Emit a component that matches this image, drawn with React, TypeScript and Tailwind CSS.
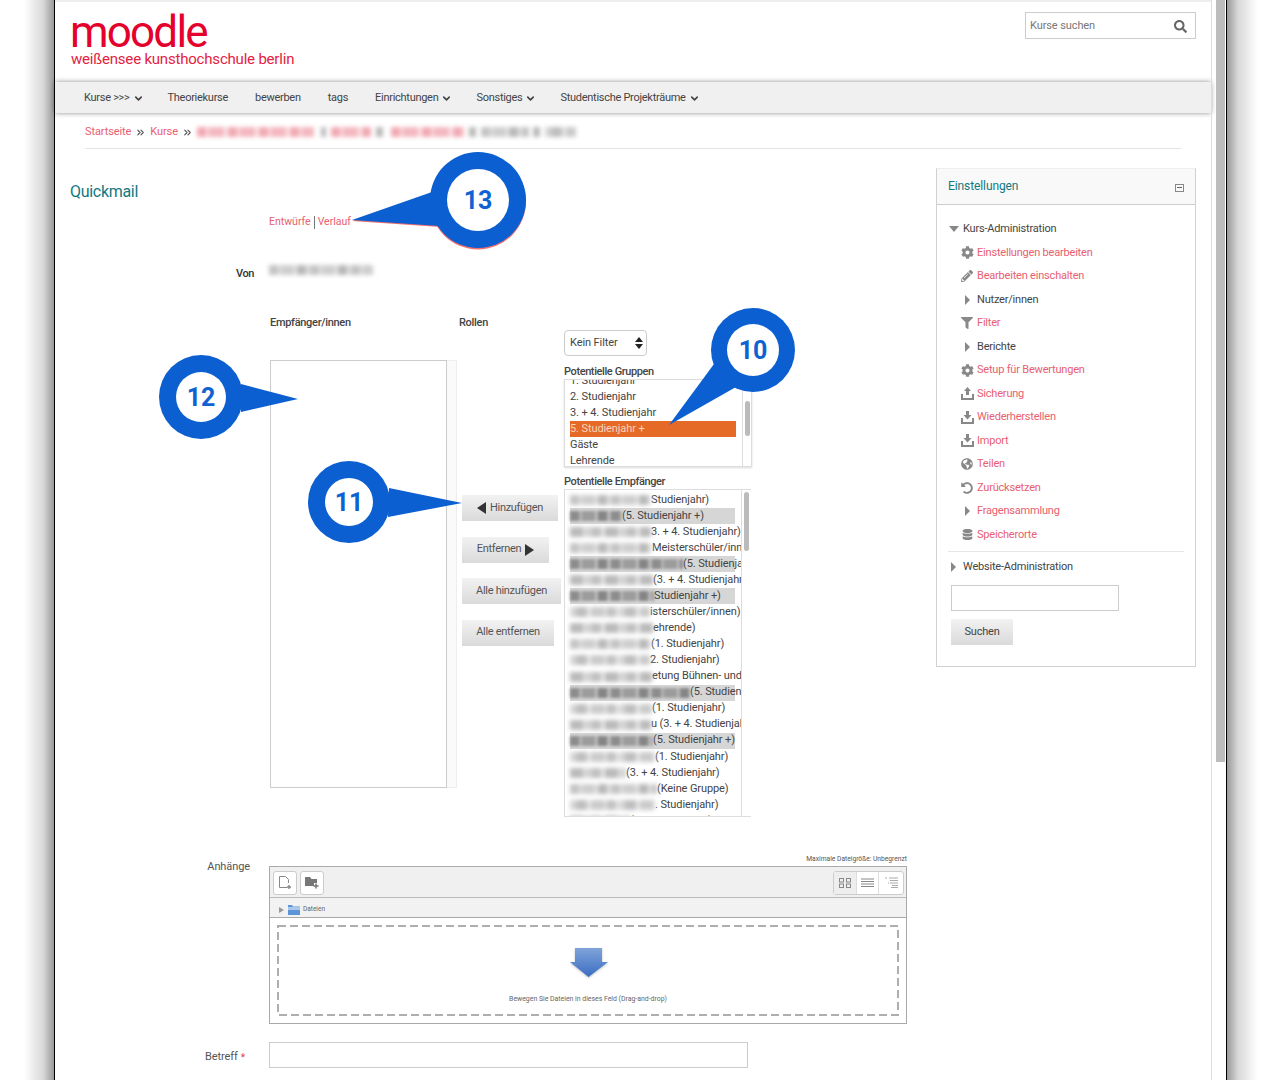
import { ChevronDown, ChevronsRight } from "lucide-react";
import { FaCog, FaDatabase, FaFilter, FaGlobeAmericas, FaPencilAlt, FaSearch, FaUndoAlt } from "react-icons/fa";

const smudges = [
  "block h-[10px] blur-[2px] bg-[repeating-linear-gradient(90deg,#c4c4c4_0_9px,#e0e0e0_9px_12px,#cecece_12px_25px,#e8e8e8_25px_28px,#b8b8b8_28px_37px,#e0e0e0_37px_41px)]",
  "block h-[10px] blur-[2px] bg-[repeating-linear-gradient(90deg,#d6d6d6_0_6px,#bebebe_6px_17px,#e6e6e6_17px_21px,#cbcbcb_21px_34px,#dedede_34px_37px,#c2c2c2_37px_46px,#e8e8e8_46px_49px)]",
  "block h-[10px] blur-[2px] bg-[repeating-linear-gradient(90deg,#bababa_0_13px,#dcdcdc_13px_16px,#d2d2d2_16px_22px,#c0c0c0_22px_31px,#e6e6e6_31px_35px)]",
];
const smudgeDark =
  "block h-[10px] blur-[1.5px] bg-[repeating-linear-gradient(90deg,#8c8c8c_0_9px,#b4b4b4_9px_12px,#9c9c9c_12px_25px,#bcbcbc_25px_28px,#858585_28px_37px,#b8b8b8_37px_41px)]";
const smudgeRed =
  "block h-[10px] blur-[2px] bg-[repeating-linear-gradient(90deg,#f1a9b3_0_9px,#f9d8dc_9px_12px,#f3b7bf_12px_27px,#fbe4e7_27px_31px)]";

const recipients = [
  { w: "w-[81px]", text: "Studienjahr)", sel: false },
  { w: "w-[52px]", text: "(5. Studienjahr +)", sel: true },
  { w: "w-[81px]", text: "3. + 4. Studienjahr)", sel: false },
  { w: "w-[82px]", text: "Meisterschüler/innen", sel: false },
  { w: "w-[113px]", text: "(5. Studienjahr +)", sel: true },
  { w: "w-[83px]", text: "(3. + 4. Studienjahr)", sel: false },
  { w: "w-[84px]", text: "Studienjahr +)", sel: true },
  { w: "w-[80px]", text: "isterschüler/innen)", sel: false },
  { w: "w-[83px]", text: "ehrende)", sel: false },
  { w: "w-[81px]", text: "(1. Studienjahr)", sel: false },
  { w: "w-[80px]", text: "2. Studienjahr)", sel: false },
  { w: "w-[82px]", text: "etung Bühnen- und", sel: false },
  { w: "w-[120px]", text: "(5. Studienjahr +)", sel: true },
  { w: "w-[82px]", text: "(1. Studienjahr)", sel: false },
  { w: "w-[81px]", text: "u (3. + 4. Studienjahr)", sel: false },
  { w: "w-[83px]", text: "(5. Studienjahr +)", sel: true },
  { w: "w-[85px]", text: "(1. Studienjahr)", sel: false },
  { w: "w-[56px]", text: "(3. + 4. Studienjahr)", sel: false },
  { w: "w-[87px]", text: "(Keine Gruppe)", sel: false },
  { w: "w-[85px]", text: ". Studienjahr)", sel: false },
  { w: "w-[60px]", text: "(5. Studienjahr +)", sel: false },
];

function TreeRight() {
  return (
    <svg width="7" height="10" viewBox="0 0 7 10" className="fill-[#888]">
      <polygon points="1,0 6,5 1,10" />
    </svg>
  );
}

function TrayUp() {
  return (
    <svg width="13" height="13" viewBox="0 0 13 13" className="fill-[#888]">
      <path d="M6.5 0 L10 4 H8 V8 H5 V4 H3 Z" />
      <path d="M0 7 H2 V11 H11 V7 H13 V13 H0 Z" />
    </svg>
  );
}

function TrayDown() {
  return (
    <svg width="13" height="13" viewBox="0 0 13 13" className="fill-[#888]">
      <path d="M5 0 H8 V4 H10.5 L6.5 8.5 L2.5 4 H5 Z" />
      <path d="M0 7 H2 V11 H11 V7 H13 V13 H0 Z" />
    </svg>
  );
}

const adminRows = [
  { icon: <FaCog size={13} />, label: "Einstellungen bearbeiten", link: true },
  { icon: <FaPencilAlt size={12} />, label: "Bearbeiten einschalten", link: true },
  { icon: <TreeRight />, label: "Nutzer/innen", link: false },
  { icon: <FaFilter size={12} />, label: "Filter", link: true },
  { icon: <TreeRight />, label: "Berichte", link: false },
  { icon: <FaCog size={13} />, label: "Setup für Bewertungen", link: true },
  { icon: <TrayUp />, label: "Sicherung", link: true },
  { icon: <TrayDown />, label: "Wiederherstellen", link: true },
  { icon: <TrayDown />, label: "Import", link: true },
  { icon: <FaGlobeAmericas size={12} />, label: "Teilen", link: true },
  { icon: <FaUndoAlt size={12} />, label: "Zurücksetzen", link: true },
  { icon: <TreeRight />, label: "Fragensammlung", link: true },
  { icon: <FaDatabase size={11} />, label: "Speicherorte", link: true },
];

function Callout({ className, w, h, cx, cy, r, inner, tail, label, rim }: {
  className: string; w: number; h: number; cx: number; cy: number; r: number; inner: number; tail: string; label: string; rim?: boolean;
}) {
  return (
    <svg width={w} height={h} viewBox={`0 0 ${w} ${h}`} className={`absolute ${className}`}>
      {rim && <circle cx={cx} cy={cy + 1.5} r={r} fill="#ef6f6f" />}
      {rim && <polygon points={tail} fill="#ef6f6f" transform="translate(0 1)" />}
      <polygon points={tail} fill="#0b5fd1" />
      <circle cx={cx} cy={cy} r={r} fill="#0b5fd1" />
      <circle cx={cx} cy={cy} r={inner} fill="#fff" />
      <text x={cx} y={cy + 9} textAnchor="middle" fontSize="25" fontWeight="700" fill="#0f62d2" fontFamily="Roboto, sans-serif">
        {label}
      </text>
    </svg>
  );
}

function SideButton({ children, className }: { children: React.ReactNode; className: string }) {
  return (
    <div className={`h-[26px] flex items-center justify-center gap-[3px] bg-linear-to-b from-[#f2f2f2] to-[#dadada] text-[#555] text-[11px] tracking-[-0.3px] ${className}`}>
      {children}
    </div>
  );
}

export default function App() {
  return (
    <div className="relative h-[1080px] overflow-hidden flex bg-white font-['Roboto',sans-serif] text-[11px] text-[#444] tracking-[-0.1px]">
      {/* window shadow */}
      <div className="w-[54px] shrink-0 bg-linear-to-r from-white from-45% via-[#d8d8d8] via-80% to-[#9a9a9a]" />

      <div className="w-[1173px] shrink-0 flex border-x border-black">
        <div className="w-[1156px] shrink-0 flex flex-col">
          {/* Header */}
          <header className="h-[82px] shrink-0 border-t-2 border-[#eee] flex justify-between pl-[15px] pr-[15px]">
            <div className="flex flex-col pt-[11px]">
              <span className="text-[44px] leading-[38px] text-[#e4022d] tracking-[-1.8px]">moodle</span>
              <span className="text-[15px] leading-[16px] text-[#e4223f] pl-[1px] tracking-[-0.2px]">weißensee kunsthochschule berlin</span>
            </div>
            <div className="mt-[10px] w-[171px] h-[27px] border border-[#ccc] flex items-center justify-between pl-[4px] pr-[8px] pt-px text-[#777]">
              <span>Kurse suchen</span>
              <FaSearch size={13} className="text-[#666]" />
            </div>
          </header>

          {/* Nav */}
          <nav className="h-[31px] shrink-0 pt-px bg-[#f0f0f0] shadow-[0_0_5px_rgba(0,0,0,0.45)] flex items-center pl-[29px] gap-[27px] text-[#444] tracking-[-0.28px]">
            <span className="flex items-center gap-[3px] -mr-[3px]">Kurse &gt;&gt;&gt; <ChevronDown size={11} strokeWidth={3.5} /></span>
            <span>Theoriekurse</span>
            <span>bewerben</span>
            <span>tags</span>
            <span className="flex items-center gap-[3px] -mr-[3px]">Einrichtungen <ChevronDown size={11} strokeWidth={3.5} /></span>
            <span className="flex items-center gap-[3px] -mr-[3px]">Sonstiges <ChevronDown size={11} strokeWidth={3.5} /></span>
            <span className="flex items-center gap-[3px]">Studentische Projekträume <ChevronDown size={11} strokeWidth={3.5} /></span>
          </nav>

          {/* Breadcrumb */}
          <div className="h-[36px] shrink-0 mx-[30px] pt-[3px] border-b border-[#e2e2e2] flex items-center text-[#e8606f]">
            <span>Startseite</span>
            <ChevronsRight size={11} strokeWidth={2.5} className="text-[#555] mx-[4px]" />
            <span>Kurse</span>
            <ChevronsRight size={11} strokeWidth={2.5} className="text-[#555] mx-[4px]" />
            <span className={`${smudgeRed} w-[117px]`} />
            <span className={`${smudges[2]} w-[5px] ml-[7px]`} />
            <span className={`${smudgeRed} w-[40px] ml-[5px]`} />
            <span className={`${smudges[2]} w-[7px] ml-[5px]`} />
            <span className={`${smudgeRed} w-[74px] ml-[8px]`} />
            <span className={`${smudges[2]} w-[7px] ml-[4px]`} />
            <span className={`${smudges[0]} w-[48px] ml-[5px]`} />
            <span className={`${smudges[2]} w-[7px] ml-[4px]`} />
            <span className={`${smudges[1]} w-[31px] ml-[5px]`} />
          </div>

          {/* Main */}
          <div className="flex pl-[15px] pr-[15px] pt-[19px]">
            <main className="w-[866px] shrink-0 flex flex-col">
              <h2 className="mt-[14px] h-[20px] leading-[20px] text-[16px] text-[#11797f] tracking-[-0.3px]">Quickmail</h2>

              <div className="mt-[12px] h-[16px] pl-[199px] flex items-center text-[#e8606f] text-[10.5px] tracking-normal">
                <span>Entwürfe</span>
                <span className="mx-[3px] w-px h-[13px] bg-[#777]" />
                <span>Verlauf</span>
              </div>

              <div className="mt-[34px] h-[16px] flex items-center">
                <span className="w-[199px] pr-[15px] text-right font-medium text-[#333] pt-[5px] tracking-[-0.4px]">Von</span>
                <span className={`${smudges[0]} w-[104px] -translate-y-[2px]`} />
              </div>

              {/* Recipients */}
              <div className="mt-[34px] flex pl-[199px] h-[503px]">
                <div className="w-[190px] shrink-0">
                  <div className="h-[16px] pt-px leading-[16px] pl-px font-medium text-[#444] tracking-[-0.3px]">Empfänger/innen</div>
                  <div className="mt-[30px] ml-px h-[428px] flex">
                    <div className="w-[177px] border border-[#ccc]" />
                    <div className="w-[10px] bg-[#fafafa] border-y border-r border-[#eee]" />
                  </div>
                </div>

                <div className="w-[105px] shrink-0">
                  <div className="h-[16px] pt-px leading-[16px] font-medium text-[#444] tracking-[-0.3px]">Rollen</div>
                  <div className="mt-[165px] pl-[3px] flex flex-col items-start gap-[15.5px]">
                    <SideButton className="w-[96px]">
                      <svg width="10" height="12" viewBox="0 0 10 12" className="fill-[#333]"><polygon points="9,0 9,12 0,6" /></svg>
                      Hinzufügen
                    </SideButton>
                    <SideButton className="w-[87px]">
                      Entfernen
                      <svg width="10" height="12" viewBox="0 0 10 12" className="fill-[#333]"><polygon points="1,0 1,12 10,6" /></svg>
                    </SideButton>
                    <SideButton className="w-[99px]">Alle hinzufügen</SideButton>
                    <SideButton className="w-[92px]">Alle entfernen</SideButton>
                  </div>
                </div>

                <div className="w-[188px] shrink-0 pt-[16px]">
                  <div className="w-[83px] h-[26px] rounded-[4px] border border-[#ccc] flex items-center justify-between pl-[5px] pr-[3px] text-[#444]">
                    Kein Filter
                    <svg width="8" height="12" viewBox="0 0 8 12" className="fill-[#222]"><polygon points="4,0 8,5 0,5" /><polygon points="4,12 8,7 0,7" /></svg>
                  </div>
                  <div className="mt-[7px] h-[16px] pt-px leading-[16px] font-medium text-[#444] tracking-[-0.4px]">Potentielle Gruppen</div>
                  <div className="h-[88px] flex border border-[#ddd] shadow-[0_1px_2px_rgba(0,0,0,0.15)]">
                    <div className="w-[178px] overflow-hidden border-r border-[#ddd] text-[#444]">
                      <div className="-mt-[7px] pl-[5px] w-[171px]">
                        <div className="h-[16px] leading-[16px]">1. Studienjahr</div>
                        <div className="h-[16px] leading-[16px]">2. Studienjahr</div>
                        <div className="h-[16px] leading-[16px]">3. + 4. Studienjahr</div>
                        <div className="h-[16px] leading-[16px] bg-[#e56a28] text-[#f8d4b8]">5. Studienjahr +</div>
                        <div className="h-[16px] leading-[16px]">Gäste</div>
                        <div className="h-[16px] leading-[16px]">Lehrende</div>
                      </div>
                    </div>
                    <div className="flex-1 pl-[2px] pt-[21px]">
                      <div className="w-[5px] h-[35px] rounded-full bg-[#bbb]" />
                    </div>
                  </div>
                  <div className="mt-[6px] h-[16px] pt-px leading-[16px] font-medium text-[#444] tracking-[-0.4px]">Potentielle Empfänger</div>
                  <div className="h-[328px] flex border-y border-l border-[#ddd] w-[187px]">
                    <div className="w-[177px] overflow-hidden border-r border-[#ddd] text-[#444]">
                      <div className="pt-[2px] pl-[5px]">
                        {recipients.map((row, i) => (
                          <div key={i} className={`h-[16.06px] w-[165px] flex items-center whitespace-nowrap ${row.sel ? "bg-[#d6d6d6]" : ""}`}>
                            <span className={`${row.sel ? smudgeDark : smudges[i % 3]} ${row.w} shrink-0`} />
                            <span>{row.text}</span>
                          </div>
                        ))}
                      </div>
                    </div>
                    <div className="flex-1 pl-[2px] pt-[2px]">
                      <div className="w-[5px] h-[59px] rounded-full bg-[#bbb]" />
                    </div>
                  </div>
                </div>
              </div>

              {/* Attachments */}
              <div className="mt-[35px] flex">
                <div className="w-[199px] pr-[19px] text-right pt-[7px] h-[23px] leading-[16px] text-[#555]">Anhänge</div>
                <div className="w-[638px] flex flex-col">
                  <div className="h-[14px] leading-[14px] text-right text-[6.7px] text-[#555] tracking-normal">Maximale Dateigröße: Unbegrenzt</div>
                  <div className="h-[158px] border border-[#aaa] flex flex-col">
                    <div className="h-[31px] shrink-0 pt-px bg-[#f0f0f0] border-b border-[#bbb] flex items-center justify-between pl-[3px] pr-[2px]">
                      <div className="flex gap-[3px]">
                        <div className="w-[24px] h-[24px] rounded-[3px] bg-white border border-[#ccc] flex items-center justify-center">
                          <svg width="14" height="15" viewBox="0 0 14 15" fill="none" stroke="#888"><path d="M9 12.5 H1.5 V1.5 H7.5 L10.5 4.5 V8" /><path d="M11 10 V14 M9 12 H13" strokeWidth="1.4" /></svg>
                        </div>
                        <div className="w-[24px] h-[24px] rounded-[3px] bg-white border border-[#ccc] flex items-center justify-center">
                          <svg width="14" height="13" viewBox="0 0 14 13"><path d="M0 1 H5 L6.5 3 H12 V7 H9 V10 H0 Z" fill="#777" /><path d="M11 7.5 V12.5 M8.5 10 H13.5" stroke="#777" strokeWidth="1.5" /></svg>
                        </div>
                      </div>
                      <div className="flex h-[24px] rounded-[3px] border border-[#ccc] bg-white">
                        <div className="w-[23px] bg-[#eee] flex items-center justify-center border-r border-[#ddd]">
                          <svg width="12" height="10" viewBox="0 0 12 10" fill="none" stroke="#888"><rect x="0.5" y="0.5" width="4" height="3.5" /><rect x="7.5" y="0.5" width="4" height="3.5" /><rect x="0.5" y="6" width="4" height="3.5" /><rect x="7.5" y="6" width="4" height="3.5" /></svg>
                        </div>
                        <div className="w-[22px] flex items-center justify-center border-r border-[#ddd]">
                          <svg width="13" height="10" viewBox="0 0 13 10" stroke="#888"><path d="M0 1 H13 M0 3.5 H13 M0 6 H13 M0 8.5 H13" /></svg>
                        </div>
                        <div className="w-[24px] flex items-center justify-center">
                          <svg width="13" height="11" viewBox="0 0 13 11" stroke="#aaa"><path d="M0 1 H2 M4 1 H13 M5 3.5 H13 M5 6 H13 M3 6 H4 M7 8.5 H13 M6 10.5 H13" /></svg>
                        </div>
                      </div>
                    </div>
                    <div className="h-[20px] shrink-0 pt-[5px] bg-[#f2f2f2] border-b border-[#aaa] flex items-center pl-[9px] gap-[3px] text-[6.5px] text-[#666] tracking-normal">
                      <svg width="5" height="6" viewBox="0 0 5 6" className="fill-[#999] mr-[1px]"><polygon points="0,0 5,3 0,6" /></svg>
                      <svg width="12" height="10" viewBox="0 0 12 10"><path d="M0 0 H4 L5 1.5 H12 V10 H0 Z" fill="#5e95d6" /><rect y="2" width="12" height="3" fill="#a9c9ec" /></svg>
                      <span>Dateien</span>
                    </div>
                    <div className="flex-1 p-[7px]">
                      <div className="relative h-full flex flex-col items-center">
                        <svg className="absolute inset-0 w-full h-full" fill="none" stroke="#aeaeae" strokeWidth="2">
                          <rect x="1" y="1" width="620" height="89" strokeDasharray="8 4" />
                        </svg>
                        <svg width="40" height="32" viewBox="0 0 40 32" className="mt-[23px] ml-[2px] drop-shadow-[0_1px_1px_rgba(0,0,0,0.25)]">
                          <defs>
                            <linearGradient id="dropArrow" x1="0" y1="0" x2="0" y2="1">
                              <stop offset="0" stopColor="#7fa4da" />
                              <stop offset="1" stopColor="#3b6dc2" />
                            </linearGradient>
                          </defs>
                          <polygon points="6,0 33,0 33,14 39,14 19.5,29 1,14 6,14" fill="url(#dropArrow)" />
                        </svg>
                        <div className="mt-[14px] text-[6.9px] leading-[10px] text-[#666] tracking-normal">Bewegen Sie Dateien in dieses Feld (Drag-and-drop)</div>
                      </div>
                    </div>
                  </div>
                </div>
              </div>

              <div className="mt-[18px] flex">
                <div className="w-[199px] pr-[24px] h-[26px] flex items-center justify-end gap-[3px] pt-[4px] text-[#555]">
                  Betreff
                  <span className="text-[#e8385a] text-[10px]">*</span>
                </div>
                <div className="w-[479px] h-[26px] border border-[#ccc]" />
              </div>
            </main>

            {/* Settings block */}
            <aside className="w-[260px] shrink-0 h-[499px] border-x border-b border-t border-t-[#eee] border-[#d0d0d0]">
              <div className="h-[36px] pb-[2px] bg-[#f9f9f9] border-b border-[#ccc] flex items-center justify-between pl-[11px] pr-[11px] text-[#11797f] text-[12px]">
                Einstellungen
                <span className="w-[9px] h-[8px] border border-[#888] flex items-center justify-center mt-[4px]">
                  <span className="w-[5px] h-px bg-[#666]" />
                </span>
              </div>
              <div className="pt-[12px] tracking-[-0.2px]">
                <div className="h-[24px] pl-[12px] flex items-center text-[#444]">
                  <span className="w-[14px]">
                    <svg width="10" height="6" viewBox="0 0 10 6" className="fill-[#888]"><polygon points="0,0 10,0 5,6" /></svg>
                  </span>
                  Kurs-Administration
                </div>
                {adminRows.map((row) => (
                  <div key={row.label} className="h-[23.5px] pl-[23px] flex items-center gap-[3px]">
                    <span className="w-[14px] h-[14px] flex items-center justify-center text-[#888]">{row.icon}</span>
                    <span className={row.link ? "text-[#e8606f]" : "text-[#444]"}>{row.label}</span>
                  </div>
                ))}
                <div className="mt-[4px] mx-[11px] border-b border-[#e6e6e6]" />
                <div className="h-[31px] mb-[2px] pl-[13px] flex items-center gap-[6px] text-[#444]">
                  <TreeRight />
                  Website-Administration
                </div>
                <div className="ml-[14px] w-[168px] h-[26px] border border-[#ccc]" />
                <div className="ml-[14px] mt-[8px] w-[62px] h-[26px] pt-[2px] flex items-center justify-center bg-linear-to-b from-[#f2f2f2] to-[#dadada] text-[#444]">Suchen</div>
              </div>
            </aside>
          </div>
        </div>

        {/* scrollbar */}
        <div className="flex-1 flex border-l border-[#ddd]">
          <div className="w-[4px]" />
          <div className="w-[9px] h-[762px] bg-[#bdbdbd]" />
        </div>
      </div>

      <div className="flex-1 bg-linear-to-l from-white from-45% via-[#d8d8d8] via-80% to-[#9a9a9a]" />

      {/* numbered callouts */}
      <Callout className="left-[345px] top-[148px]" w={186} h={106} cx={133} cy={52} r={48} inner={31} tail="7,72 87,44 95,78" label="13" rim />
      <Callout className="left-[664px] top-[304px]" w={135} h={125} cx={89} cy={46} r={42} inner={26} tail="5,121 50,60 72,83" label="10" />
      <Callout className="left-[155px] top-[351px]" w={147} h={92} cx={46} cy={46} r={42} inner={25} tail="86,33 143,48 86,61" label="12" />
      <Callout className="left-[304px] top-[456px]" w={162} h={92} cx={45} cy={46} r={41} inner={24} tail="85,32 158,47 84,61" label="11" />
    </div>
  );
}
